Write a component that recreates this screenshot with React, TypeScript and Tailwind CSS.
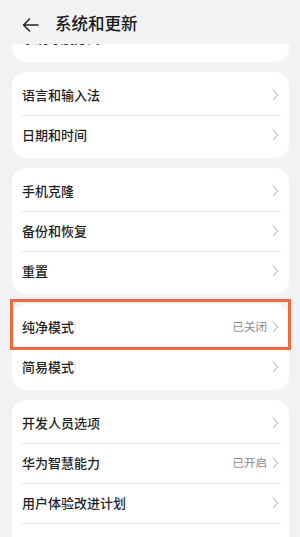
type Item = { label: string; value?: string; highlight?: boolean };

const groups: Item[][] = [
  [{ label: "系统导航方式" }],
  [{ label: "语言和输入法" }, { label: "日期和时间" }],
  [{ label: "手机克隆" }, { label: "备份和恢复" }, { label: "重置" }],
  [{ label: "纯净模式", value: "已关闭", highlight: true }, { label: "简易模式" }],
  [
    { label: "开发人员选项" },
    { label: "华为智慧能力", value: "已开启" },
    { label: "用户体验改进计划" },
    { label: "认证标志" },
  ],
];

const font = { fontFamily: '"Noto Sans CJK SC", "Noto Sans", sans-serif' };

function Chevron() {
  return (
    <svg width="7" height="12" viewBox="0 0 7 12" fill="none" className="shrink-0">
      <path d="M1.2 1.2L5.8 6l-4.6 4.8" stroke="#c6c6c6" strokeWidth="1.2" strokeLinecap="round" strokeLinejoin="round" />
    </svg>
  );
}

function Row({ item, first }: { item: Item; first?: boolean }) {
  return (
    <div
      className={`relative flex h-[39px] items-center pl-[10px] pr-[10px] ${first ? "pb-[3px]" : "pb-[2px]"}`}
    >
      <span className="flex-1 text-[13px] font-medium text-[#1f1f1f]">{item.label}</span>
      {item.value ? (
        <span className="mr-[5px] text-[11.5px] text-[#8a8a8a]">{item.value}</span>
      ) : null}
      <Chevron />
      {item.highlight ? (
        <div className="pointer-events-none absolute -left-[2px] -right-[2px] -top-[9px] -bottom-[3px] border-[3px] border-[#ee6a3a]" />
      ) : null}
    </div>
  );
}

export default function App() {
  return (
    <div className="flex h-[537px] w-[300px] flex-col overflow-hidden bg-[#f1f2f4]" style={font}>
      <header className="relative z-10 flex h-[44px] shrink-0 items-center bg-[#f1f2f4] pl-[22px]">
        <svg width="17" height="14" viewBox="0 0 17 14" fill="none" className="mt-[5px]">
          <path
            d="M16 7H1.5M7.5 1L1.5 7l6 6"
            stroke="#222"
            strokeWidth="1.5"
            strokeLinecap="round"
            strokeLinejoin="round"
          />
        </svg>
        <h1 className="ml-[16px] mt-[3px] text-[16.5px] font-medium text-[#1a1a1a]">系统和更新</h1>
      </header>

      <div className="flex-1 overflow-hidden">
        <div className="-mt-[28px] flex flex-col gap-[10px] pl-[12px] pr-[11px]">
          {groups.map((group, gi) => (
            <div key={gi} className="rounded-[14px] bg-white pb-[3px] pt-[4px]">
              {group.map((item, i) => (
                <div key={item.label}>
                  {i > 0 ? <div className="ml-[10px] mr-[8px] h-px bg-[#e7e7e7]" /> : null}
                  <Row item={item} first={gi === 0} />
                </div>
              ))}
            </div>
          ))}
        </div>
      </div>
    </div>
  );
}
